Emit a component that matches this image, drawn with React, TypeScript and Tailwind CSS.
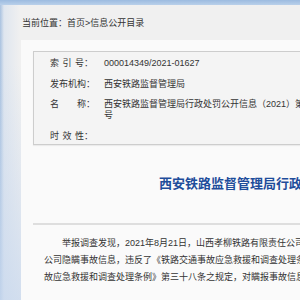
export default function App() {
  const font = "font-['Liberation_Sans','Noto_Sans_CJK_SC',sans-serif]";
  return (
    <div className={`w-[300px] h-[300px] overflow-hidden bg-[#f0f0f0] text-[#333] ${font} flex flex-col`}>
      <div className="h-[5px] shrink-0 bg-[linear-gradient(to_bottom,#9cbbe0,#b9d0ea)]" />
      <div className="flex flex-1 min-h-0">
        <div className="w-[21px] shrink-0 bg-[linear-gradient(to_bottom,rgba(240,240,240,0)_20%,rgba(200,216,238,0.75)),linear-gradient(to_right,#a9c2e0_0px,#dfe6ef_4px,#f0f0f0_20px)]" />
        <div className="flex-1 min-w-0 flex flex-col">
          <div className="h-[35px] shrink-0 flex items-center pl-[1px] text-[9px] leading-[12px] whitespace-nowrap">
            当前位置：首页&gt;信息公开目录
          </div>
          <div className="flex-1 bg-[#fafafa] pl-[12px] pt-[11px]">
            <div className="w-[400px] border border-[#cdcdcd] bg-[#f4f4f4] pl-[16px] text-[9px] whitespace-nowrap shadow-[0_1px_1px_rgba(0,0,0,0.06)]">
              <div className="flex py-[4.5px] leading-[12px]">
                <div className="w-[54px] shrink-0"><span className="tracking-[3.5px]">索引</span>号：</div>
                <div>000014349/2021-01627</div>
              </div>
              <div className="flex py-[4.5px] leading-[12px]">
                <div className="w-[54px] shrink-0">发布机构：</div>
                <div>西安铁路监督管理局</div>
              </div>
              <div className="flex py-[4.5px] leading-[11px]">
                <div className="w-[54px] shrink-0">名　　称：</div>
                <div>西安铁路监督管理局行政处罚公开信息（2021）第<br />号</div>
              </div>
              <div className="flex pt-[4.5px] pb-[2.5px] leading-[12px]">
                <div className="w-[54px] shrink-0"><span className="tracking-[3.5px]">时效</span>性：</div>
                <div></div>
              </div>
            </div>
            <div className="mt-[31px] pl-[126px] h-[16px] leading-[16px] text-[13px] font-bold text-[#1e4d9b] whitespace-nowrap">
              西安铁路监督管理局行政处罚公开信息（2021）第1号
            </div>
            <div className="mt-[31px] w-[400px] h-[2px] bg-[#dedede]" />
            <p className="mt-[10px] pl-[11px] text-[9px] leading-[17px] whitespace-nowrap">
              <span className="pl-[18px]">举报调查发现，2021年8月21日，山西孝柳铁路有限责任公司所属</span><br />
              公司隐瞒事故信息，违反了《铁路交通事故应急救援和调查处理条例》和《铁路交通事<br />
              故应急救援和调查处理条例》第三十八条之规定，对瞒报事故信息的单位进行处罚。
            </p>
          </div>
        </div>
      </div>
    </div>
  );
}
